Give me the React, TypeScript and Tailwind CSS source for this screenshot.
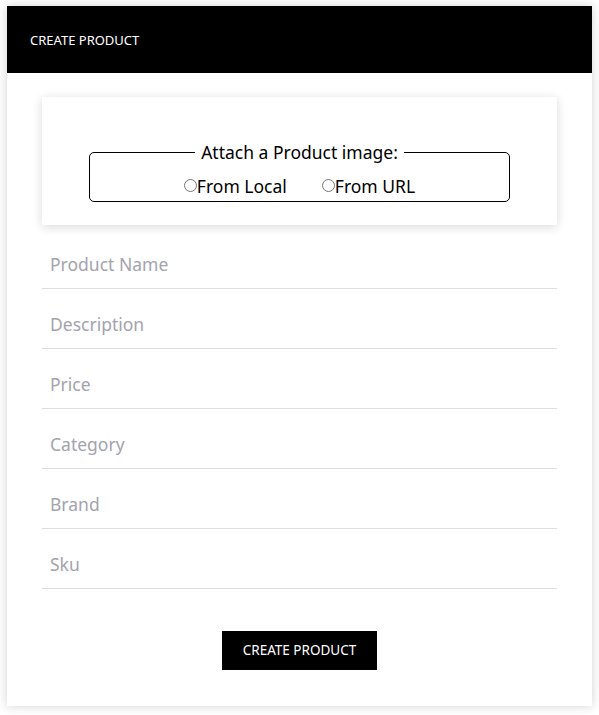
import React from "react";

const fields = ["Product Name", "Description", "Price", "Category", "Brand", "Sku"];

function Radio({ label }: { label: string }) {
  return (
    <label className="flex items-center">
      <span className="w-[13px] h-[13px] rounded-full border border-[#767676] bg-white mb-[2px]" />
      <span>{label}</span>
    </label>
  );
}

export default function App() {
  return (
    <div
      className="min-h-[715px] bg-white pt-[6px] px-[7px] text-black"
      style={{ fontFamily: '"Noto Sans", "Open Sans", sans-serif' }}
    >
      <div className="w-[585px] h-[700px] bg-white shadow-[0_0_10px_rgba(0,0,0,0.18)] flex flex-col">
        <div className="h-[67px] bg-black flex items-center px-[23px]">
          <span className="text-white text-[13px] leading-none pt-[2px]">CREATE PRODUCT</span>
        </div>
        <div className="px-[35px] pt-[24px] flex flex-col">
          <div className="h-[128px] bg-white shadow-[0_2px_10px_rgba(0,0,0,0.15)] flex flex-col justify-end px-[47px] pb-[23px]">
            <fieldset className="border border-black rounded-[5px] h-[61px] flex flex-col items-center px-2">
              <legend className="mx-auto px-[6px] text-[17.5px] leading-[22px]">Attach a Product image:</legend>
              <div className="flex items-center gap-[35px] text-[17.5px] leading-[22px] mt-[12px]">
                <Radio label="From Local" />
                <Radio label="From URL" />
              </div>
            </fieldset>
          </div>
          <div className="flex flex-col mt-[4px]">
            {fields.map((f) => (
              <input
                key={f}
                placeholder={f}
                className="h-[60px] border-b border-[#dedede] px-[8px] pt-[11px] text-[17.5px] outline-none placeholder:text-[#a3a3ad]"
                style={{ fontFamily: '"Noto Sans", "Open Sans", sans-serif' }}
              />
            ))}
          </div>
          <div className="flex justify-center pt-[42px]">
            <button className="w-[155px] h-[39px] bg-black text-white text-[13.5px]">CREATE PRODUCT</button>
          </div>
        </div>
      </div>
    </div>
  );
}
